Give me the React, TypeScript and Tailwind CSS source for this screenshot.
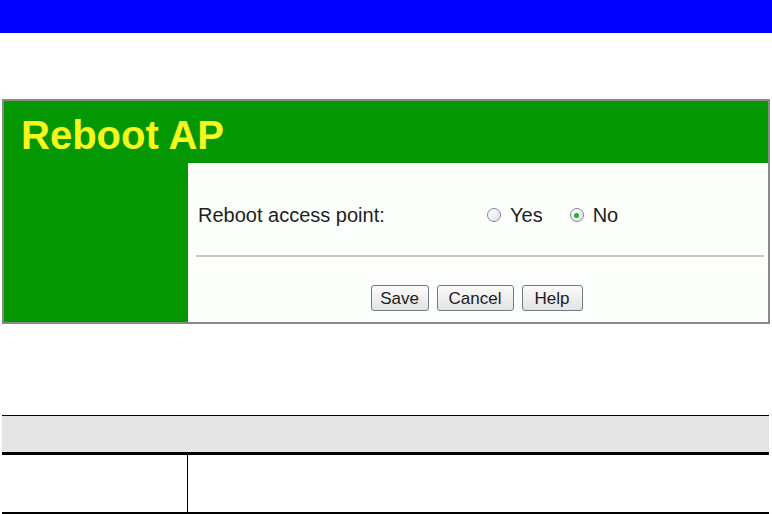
import React from "react";

function Radio({ checked, label }: { checked?: boolean; label: string }) {
  return (
    <label className="flex items-center">
      <span className="relative w-[14px] h-[14px] rounded-full border border-[#7f8993] bg-gradient-to-br from-white to-[#dfe1e4] flex items-center justify-center">
        {checked && <span className="w-[5px] h-[5px] rounded-full bg-[#2ea82e]" />}
      </span>
      <span className="ml-[9px]">{label}</span>
    </label>
  );
}

function Btn({ label, width }: { label: string; width: string }) {
  return (
    <button
      className={`${width} h-[26px] rounded-[3px] border border-[#6f7b87] bg-gradient-to-b from-[#fbfbfb] to-[#e3e3e3] text-[17px] text-[#1c1c1c] leading-none flex items-center justify-center`}
    >
      {label}
    </button>
  );
}

export default function App() {
  return (
    <div className="w-[772px] h-[514px] bg-white overflow-hidden font-['Liberation_Sans',Arial,sans-serif]">
      <div className="h-[33px] bg-[#0000ff]" />

      <div className="mt-[66px] ml-[2px] w-[768px] h-[225px] border-2 border-[#8a8a84] bg-[#039703] flex flex-col">
        <div className="h-[62px] pt-[14px] pl-[17px]">
          <h1 className="text-[40px] leading-[40px] font-bold text-[#f6f81e]">Reboot AP</h1>
        </div>
        <div className="flex flex-1">
          <div className="w-[184px]" />
          <div className="flex-1 bg-[#fcfefc] pt-[38px] text-[20px] text-[#1e1e1e]">
            <div className="flex items-center h-[28px] leading-[28px] pl-[10px]">
              <span className="w-[289px]">Reboot access point:</span>
              <div className="flex items-center gap-[27px]">
                <Radio label="Yes" />
                <Radio label="No" checked />
              </div>
            </div>
            <div className="mt-[26px] ml-[8px] mr-[4px] h-[2px] bg-[#cbc6bd]" />
            <div className="mt-[28px] flex justify-center gap-[8px] pr-[3px]">
              <Btn label="Save" width="w-[58px]" />
              <Btn label="Cancel" width="w-[77px]" />
              <Btn label="Help" width="w-[61px]" />
            </div>
          </div>
        </div>
      </div>

      <div className="mt-[91px] ml-[2px] w-[767px]">
        <div className="h-[40px] border-t border-black bg-[#e5e5e5] border-b-[3px]" />
        <div className="flex h-[59px] border-b-2 border-black">
          <div className="w-[186px] border-r border-black" />
          <div className="flex-1" />
        </div>
      </div>
    </div>
  );
}
